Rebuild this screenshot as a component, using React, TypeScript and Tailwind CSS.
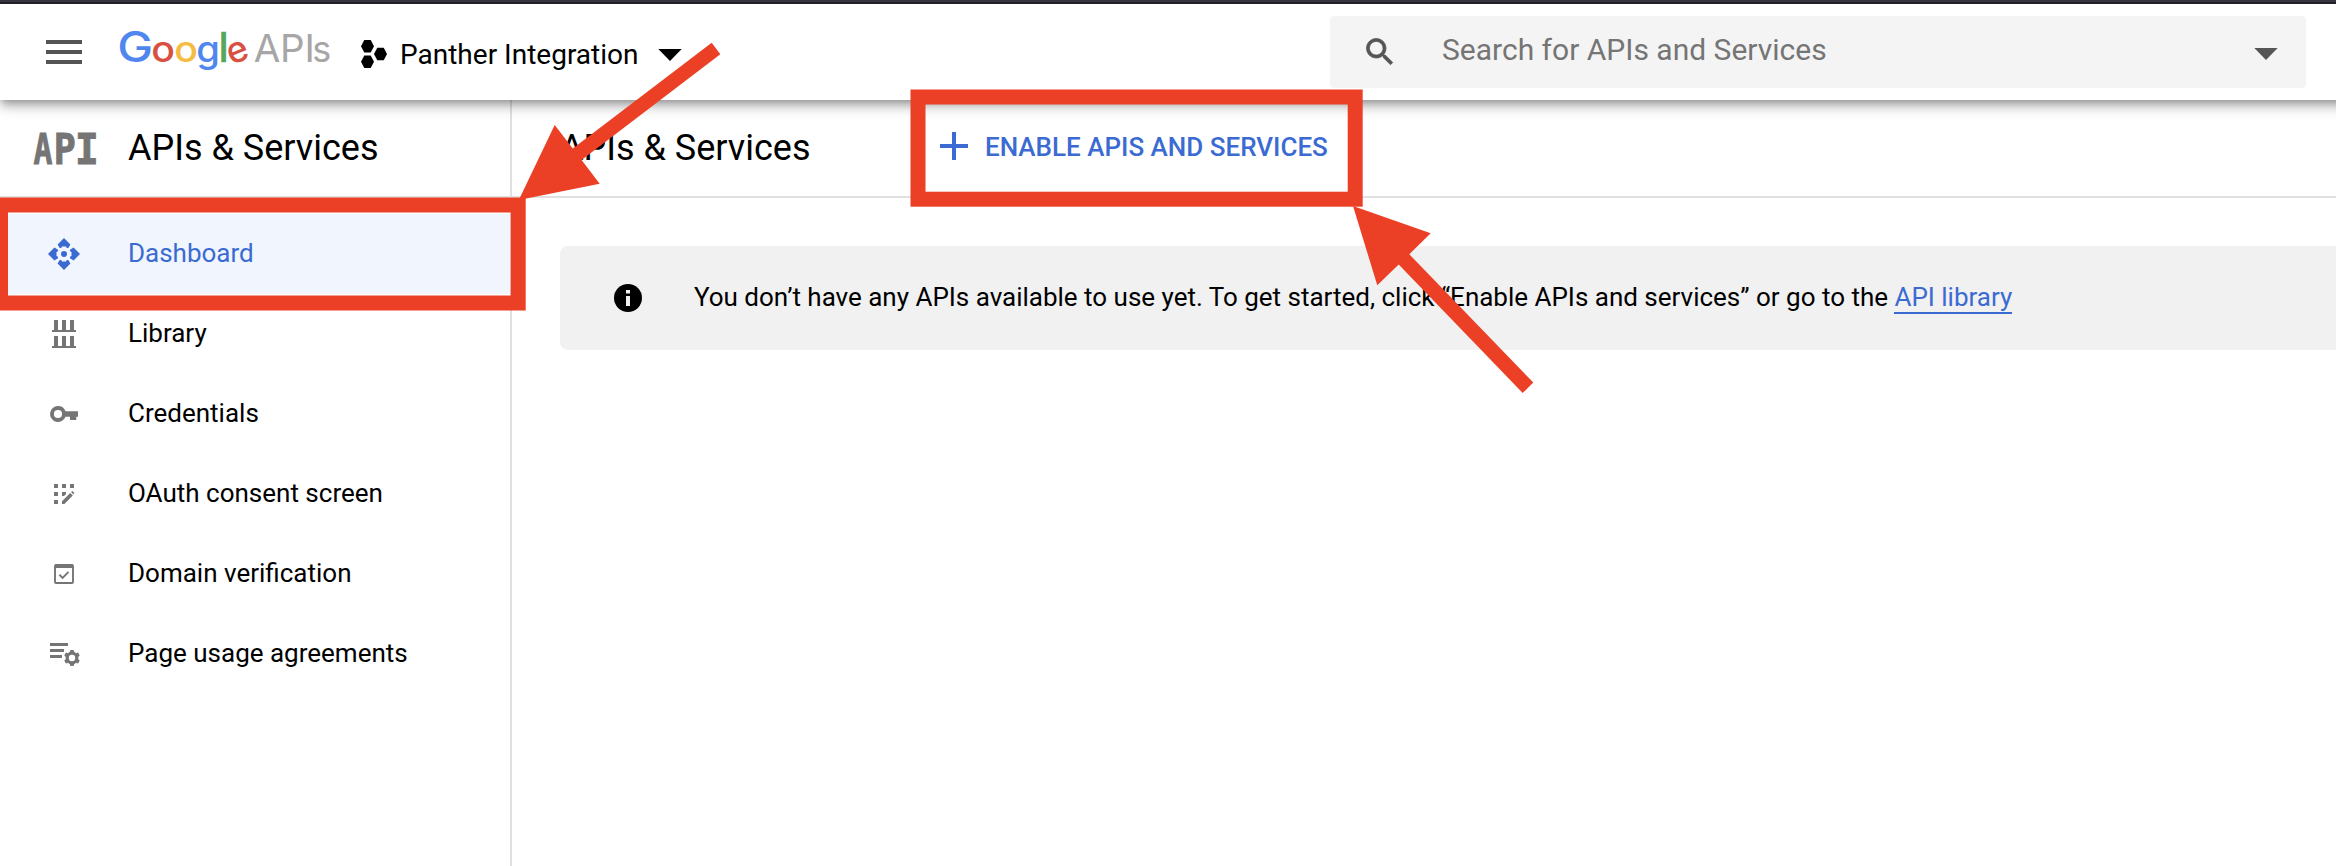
import type { ReactNode } from 'react';
import { MdMenu } from 'react-icons/md';

function GoogleApisLogo() {
  return (
    <svg
      width="224"
      height="64"
      viewBox="112 20 224 64"
      className="ml-6 shrink-0 font-['Inter',sans-serif] font-medium"
      textAnchor="middle"
      aria-label="Google APIs"
    >
      <text transform="translate(135.2 62) scale(1.14 1)" fontSize="42" fill="#4f87ee">G</text>
      <text transform="translate(163 62.2) scale(1.09 1)" fontSize="36" fill="#d8503f">o</text>
      <text transform="translate(186 62.2) scale(1.09 1)" fontSize="36" fill="#f4bd42">o</text>
      <text transform="translate(208 62.4) scale(1.06 1.02)" fontSize="36" fill="#4f87ee">g</text>
      <text x="223.7" y="62" fontSize="40.500" fill="#58a55c" stroke="#58a55c" strokeWidth="0.400">l</text>
      <text fontSize="36" fill="#d8503f" transform="rotate(-22 237.8 52) translate(237.6 62)">e</text>
      <g fill="#a6a6a6" fontWeight="400" fontSize="38.500">
        <text x="267" y="62">A</text>
        <text x="292.2" y="62">P</text>
        <text x="309.6" y="62">I</text>
        <text x="321.8" y="62" fontSize="36">s</text>
      </g>
    </svg>
  );
}

function ProjectIcon() {
  const hex = '0,6.2 3.3,0 9.7,0 13,6.2 9.7,12.4 3.3,12.4';
  return (
    <svg width="26" height="28" viewBox="0 0 26 28" className="shrink-0">
      <polygon points={hex} />
      <polygon points={hex} transform="translate(13 7.8)" />
      <polygon points={hex} transform="translate(0 15.6)" />
    </svg>
  );
}

function SearchIcon() {
  return (
    <svg width="36" height="36" viewBox="0 0 24 24" className="shrink-0" fill="#555555" stroke="#555555" strokeWidth="0.500">
      <path d="M15.5 14h-.79l-.28-.27C15.41 12.59 16 11.11 16 9.5 16 5.91 13.09 3 9.5 3S3 5.91 3 9.5 5.91 16 9.5 16c1.61 0 3.09-.59 4.23-1.57l.27.28v.79l5 4.99L20.49 19l-4.99-5zm-6 0C7.01 14 5 11.99 5 9.5S7.01 5 9.5 5 14 7.01 14 9.5 11.99 14 9.5 14z" />
    </svg>
  );
}

function Caret({ className }: { className: string }) {
  return (
    <svg width="24" height="12" viewBox="0 0 24 12" className={className} fill="currentColor">
      <path d="M0.3 0H23.7L12 12z" />
    </svg>
  );
}

const petal = '0,-16 6.4,-9.6 4.3,-6 2.7,-6 2,-7.5 -2,-7.5 -2.7,-6 -4.3,-6 -6.4,-9.6';

function DashboardIcon() {
  return (
    <svg width="36" height="36" viewBox="-18 -18 36 36" fill="#3b6bd2">
      <polygon points={petal} />
      <polygon points={petal} transform="rotate(90)" />
      <polygon points={petal} transform="rotate(180)" />
      <polygon points={petal} transform="rotate(270)" />
      <circle r="3" />
    </svg>
  );
}

function LibraryIcon() {
  return (
    <svg width="36" height="36" viewBox="0 0 36 36" fill="#757575">
      <path d="M8 4h4v10h4V4h4v10h4V4h4v10h2v2H6v-2h2zM8 20h4v10h4V20h4v10h4V20h4v10h2v2H6v-2h2z" />
    </svg>
  );
}

function KeyIcon() {
  return (
    <svg width="36" height="36" viewBox="0 0 36 36" fill="#757575">
      <path
        fillRule="evenodd"
        d="M12 10a8 8 0 0 1 7.5 5.2H32v5.6h-1.7V24H24v-3.2h-4.5A8 8 0 1 1 12 10zm0 3.9a4.1 4.1 0 1 0 0 8.2 4.1 4.1 0 0 0 0-8.2z"
      />
    </svg>
  );
}

function ConsentIcon() {
  return (
    <svg width="36" height="36" viewBox="0 0 36 36" fill="#757575">
      <path d="M8 8h4v4H8zM16 8h4v4h-4zM24 8h4v4h-4zM8 16h4v4H8zM16 16h4v2l-2 2h-2zM8 24h4v4H8z" />
      <path d="M16 25.2l8.2-8.2 2.6 2.6-8.4 8.4H16zM25.1 16.1l1.3-1.1 2 2-1.1 1.5z" />
    </svg>
  );
}

function DomainIcon() {
  return (
    <svg width="36" height="36" viewBox="0 0 36 36" fill="none" stroke="#757575">
      <rect x="9" y="9" width="18" height="18" rx="1" strokeWidth="1.9" />
      <path d="M9 10.3H27" strokeWidth="3.4" />
      <path d="M13.4 18.8l3.2 3.1 5.9-6" strokeWidth="1.9" />
    </svg>
  );
}

const gearAngles = [0, 60, 120, 180, 240, 300];

function AgreementsIcon() {
  return (
    <svg width="36" height="36" viewBox="0 0 36 36" fill="#757575">
      <path d="M4 7h18v3H4zM4 13h14v3H4zM4 19h12v3H4z" />
      <g transform="translate(26 22)">
        <circle r="4.8" fill="none" stroke="#757575" strokeWidth="3.2" />
        {gearAngles.map((a) => (
          <path key={a} d="M-2.400-5L-1.600-8H1.600L2.400-5z" transform={`rotate(${a})`} />
        ))}
      </g>
    </svg>
  );
}

function InfoIcon() {
  return (
    <svg width="28" height="28" viewBox="0 0 28 28" className="shrink-0">
      <circle cx="14" cy="14" r="14" />
      <path d="M12 6h4v3.6h-4zM12 12h4v10h-4z" fill="#f1f1f1" />
    </svg>
  );
}

function ApiProductIcon() {
  return (
    <svg width="80" height="72" viewBox="24 112 80 72" className="shrink-0" aria-label="API">
      <g
        fontSize="42.5"
        fontWeight="700"
        fill="#757575"
        stroke="#757575"
        textAnchor="middle"
        className="font-['DejaVu_Sans_Mono',monospace]"
      >
        <text transform="translate(43 163.6) scale(0.74 1)">A</text>
        <text transform="translate(64.7 163.6) scale(0.86 1)">P</text>
        <text transform="translate(87 163.6) scale(0.93 1)">I</text>
      </g>
    </svg>
  );
}

const navItems: { label: string; icon: ReactNode; active?: boolean }[] = [
  { label: 'Dashboard', icon: <DashboardIcon />, active: true },
  { label: 'Library', icon: <LibraryIcon /> },
  { label: 'Credentials', icon: <KeyIcon /> },
  { label: 'OAuth consent screen', icon: <ConsentIcon /> },
  { label: 'Domain verification', icon: <DomainIcon /> },
  { label: 'Page usage agreements', icon: <AgreementsIcon /> },
];

function TopBar() {
  return (
    <header className="relative z-10 w-[2376px] bg-white shadow-[0_8px_10px_rgba(0,0,0,0.14),0_2px_20px_rgba(0,0,0,0.12),0_4px_8px_-2px_rgba(0,0,0,0.3)]">
      <div className="h-1 border-b-2 border-[#222127] bg-[#36353f]" />
      <div className="flex h-24 w-[2336px] items-center pl-10">
        <MdMenu className="size-12 shrink-0 text-[#555555]" />
        <GoogleApisLogo />
        <div className="ml-[25px] flex items-center pt-1">
          <ProjectIcon />
          <span className="ml-[13px] pt-0.5 text-[28px] leading-[34px] whitespace-nowrap">Panther Integration</span>
          <Caret className="mt-0.5 ml-5 text-black" />
        </div>
        <div className="mr-[30px] ml-auto flex h-[72px] w-[976px] items-center rounded bg-[#f4f4f4] pr-[28px] pl-[32px]">
          <SearchIcon />
          <span className="ml-[44px] flex-1 pb-1 text-[30px] leading-9 text-[#757575]">Search for APIs and Services</span>
          <Caret className="mt-1 text-[#555555]" />
        </div>
      </div>
    </header>
  );
}

function Sidebar() {
  return (
    <aside className="flex w-[512px] shrink-0 flex-col border-r-2 border-[#e0e0e0]">
      <div className="flex h-[98px] items-center border-b-2 border-[#e0e0e0] pl-6">
        <ApiProductIcon />
        <h2 className="ml-6 text-[36px] leading-[42px]">APIs &amp; Services</h2>
      </div>
      <nav className="flex flex-col pt-4">
        {navItems.map((item) => (
          <a
            key={item.label}
            className={
              item.active
                ? 'flex h-20 items-center bg-[#f0f5fe] pl-[46px] text-[#3b6bd2]'
                : 'flex h-20 items-center pl-[46px]'
            }
          >
            {item.icon}
            <span className="ml-[46px] pb-0.5 text-[26px] leading-[30px]">{item.label}</span>
          </a>
        ))}
      </nav>
    </aside>
  );
}

function Main() {
  return (
    <main className="flex min-w-0 flex-1 flex-col">
      <div className="flex h-[98px] items-center border-b-2 border-[#e0e0e0] pl-12">
        <h1 className="w-[380px] text-[36px] leading-[42px]">APIs &amp; Services</h1>
        <button className="flex items-center gap-[17px] pb-0.5 text-[26px] leading-[30px] font-medium text-[#3b6bd2]">
          <svg width="28" height="28" viewBox="0 0 28 28" className="mb-0.5">
            <path d="M14 0V28M0 14H28" stroke="currentColor" strokeWidth="4" />
          </svg>
          ENABLE APIS AND SERVICES
        </button>
      </div>
      <div className="mt-12 ml-12 flex h-[104px] items-center rounded-l-lg bg-[#f1f1f1] pl-[54px]">
        <InfoIcon />
        <p className="ml-[52px] pb-0.5 text-[26px] leading-[30px] tracking-[-0.008px] whitespace-nowrap">
          You don’t have any APIs available to use yet. To get started, click “Enable APIs and services” or go to the{' '}
          <a className="border-b-2 border-[#3b6bd2] text-[#3b6bd2]">API library</a>
        </p>
      </div>
    </main>
  );
}

function Annotations() {
  return (
    <svg className="pointer-events-none absolute inset-0 z-20" width="2336" height="866" viewBox="0 0 2336 866">
      <g fill="none" stroke="#eb4026" strokeWidth="15">
        <rect x="0.5" y="205" width="517.7" height="98" />
        <rect x="918" y="97" width="437.2" height="102.2" />
      </g>
      <g fill="#eb4026">
        <path d="M518.8 200L554.7 125L572.8 148.6L711.7 42.7L720.3 54.3L581.6 160.1L599.7 183.7z" />
        <path d="M1353 206L1430.7 233.3L1409.3 254.3L1533.3 382.5L1522.7 393L1398.7 264.5L1377.3 285.3z" />
      </g>
    </svg>
  );
}

export default function App() {
  return (
    <div className="relative flex h-[866px] w-[2336px] flex-col overflow-hidden bg-white font-['Roboto',sans-serif] text-black">
      <TopBar />
      <div className="flex flex-1">
        <Sidebar />
        <Main />
      </div>
      <Annotations />
    </div>
  );
}
